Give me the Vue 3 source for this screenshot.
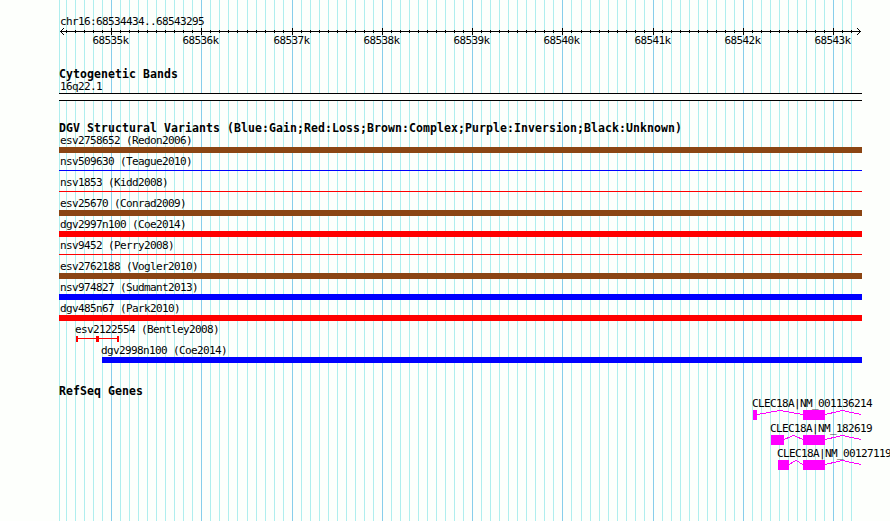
<script setup>
const inicio = 68534434;
const fin = 68543295;
const escala = 800 / (fin - inicio + 1);

function posicion(bp){
  return Math.round(60 + (bp - inicio) * escala);
}

// una linea cada 100 bases, mas oscura cada 1000
let lineas = [];
for(let bp = 68534500; bp < 68543300; bp += 100){
  lineas.push({ x: posicion(bp), mayor: bp % 1000 === 0, texto: bp / 1000 + 'k' });
}
const mayores = lineas.filter(l => l.mayor);

const variantes = [
  { nombre: 'esv2758652 (Redon2006)', x: 59, color: '#8b4513', tipo: 'barra' },
  { nombre: 'nsv509630 (Teague2010)', x: 59, color: '#0000ff', tipo: 'linea' },
  { nombre: 'nsv1853 (Kidd2008)', x: 59, color: '#ff0000', tipo: 'linea' },
  { nombre: 'esv25670 (Conrad2009)', x: 59, color: '#8b4513', tipo: 'barra' },
  { nombre: 'dgv2997n100 (Coe2014)', x: 59, color: '#ff0000', tipo: 'barra' },
  { nombre: 'nsv9452 (Perry2008)', x: 59, color: '#ff0000', tipo: 'linea' },
  { nombre: 'esv2762188 (Vogler2010)', x: 59, color: '#8b4513', tipo: 'barra' },
  { nombre: 'nsv974827 (Sudmant2013)', x: 59, color: '#0000ff', tipo: 'barra' },
  { nombre: 'dgv485n67 (Park2010)', x: 59, color: '#ff0000', tipo: 'barra' },
  { nombre: 'esv2122554 (Bentley2008)', x: 74, color: '#ff0000', tipo: 'rango' },
  { nombre: 'dgv2998n100 (Coe2014)', x: 102, texto: 101, color: '#0000ff', tipo: 'barra' }
];

const genes = [
  { nombre: 'CLEC18A|NM_001136214', texto: 752, x: 753, ancho: 4 },
  { nombre: 'CLEC18A|NM_182619', texto: 770, x: 771, ancho: 13 },
  { nombre: 'CLEC18A|NM_001271197', texto: 777, x: 778, ancho: 11 }
];

function intron(g){
  let a = g.x + g.ancho;
  return `${a},4.5 ${(a + 803) / 2},0.5 803,4.5`;
}
</script>

<template>
  <div class="navegador">
    <svg class="rejilla" width="890" height="521" shape-rendering="crispEdges">
      <rect x="59" y="0" width="1" height="521" fill="#afeeee" />
      <rect v-for="l in lineas" :key="l.x" :x="l.x" y="0" width="1" height="521" :fill="l.mayor ? '#87ceeb' : '#afeeee'" />
    </svg>

    <div class="pistas">
      <div class="regla">
        <div class="etiqueta region">chr16:68534434..68543295</div>
        <svg class="eje" width="890" height="7" shape-rendering="crispEdges">
          <rect x="60" y="3" width="801" height="1" />
          <rect v-for="l in lineas" :key="l.x" :x="l.x" :y="l.mayor ? 0 : 2" width="1" :height="l.mayor ? 7 : 3" />
          <path d="M61 2h1v1h-1zM62 1h1v1h-1zM63 0h1v1h-1zM61 4h1v1h-1zM62 5h1v1h-1zM63 6h1v1h-1z" />
          <path d="M859 2h1v1h-1zM858 1h1v1h-1zM857 0h1v1h-1zM859 4h1v1h-1zM858 5h1v1h-1zM857 6h1v1h-1z" />
        </svg>
        <svg class="numeros" width="890" height="12">
          <text v-for="l in mayores" :key="l.x" :x="l.x - 18.5" y="9">{{ l.texto }}</text>
        </svg>
      </div>

      <div class="bandas">
        <h2>Cytogenetic Bands</h2>
        <div class="etiqueta region">16q22.1</div>
        <div class="banda"></div>
      </div>

      <div class="variantes">
        <h2>DGV Structural Variants (Blue:Gain;Red:Loss;Brown:Complex;Purple:Inversion;Black:Unknown)</h2>
        <div v-for="v in variantes" :key="v.nombre" class="variante">
          <div class="etiqueta" :style="{ paddingLeft: (v.texto || v.x + 1) + 'px' }">{{ v.nombre }}</div>
          <svg width="890" height="9" shape-rendering="crispEdges" :fill="v.color">
            <rect v-if="v.tipo === 'barra'" :x="v.x" y="1" :width="862 - v.x" height="6" />
            <rect v-if="v.tipo === 'linea'" :x="v.x" y="3" :width="862 - v.x" height="1" />
            <g v-if="v.tipo === 'rango'">
              <rect x="76" y="3" width="43" height="1" />
              <rect x="76" y="1" width="2" height="6" />
              <rect x="96" y="1" width="3" height="6" />
              <rect x="117" y="1" width="2" height="6" />
            </g>
          </svg>
        </div>
      </div>

      <div class="genes">
        <h2>RefSeq Genes</h2>
        <div v-for="g in genes" :key="g.nombre" class="gen">
          <div class="etiqueta" :style="{ paddingLeft: g.texto + 'px' }">{{ g.nombre }}</div>
          <svg width="890" height="12" shape-rendering="crispEdges">
            <rect :x="g.x" y="0" :width="g.ancho" height="10" fill="#ff00ff" />
            <rect x="803" y="0" width="22" height="10" fill="#ff00ff" />
            <polyline :points="intron(g)" />
            <polyline points="825,4.5 842.5,0.5 861,4.5" />
          </svg>
        </div>
      </div>
    </div>
  </div>
</template>

<style>
body{
  margin: 0;
  overflow: hidden;
}
</style>

<style scoped>
.navegador{
  display: grid;
  width: 890px;
  height: 521px;
  overflow: hidden;
  background-color: #fdfffc;
  color: #000;
  font-family: "DejaVu Sans Mono", "Liberation Mono", monospace;
  font-size: 11px;
}
.rejilla, .pistas{
  grid-area: 1 / 1;
}
.pistas{
  display: flex;
  flex-direction: column;
  width: 890px;
  min-width: 0;
  overflow: hidden;
}
svg{
  display: block;
}
.etiqueta, .numeros{
  box-sizing: border-box;
  height: 12px;
  line-height: 12px;
  letter-spacing: -0.622px;
  white-space: nowrap;
}
.etiqueta{
  padding-top: 1px;
}
.region{
  padding-left: 60px;
}
.regla{
  padding-top: 15px;
}
.eje{
  margin-top: 1px;
}
h2{
  margin: 0;
  padding-left: 59px;
  height: 12px;
  line-height: 12px;
  font-size: 11.5px;
  font-weight: bold;
  letter-spacing: 0.077px;
  white-space: nowrap;
}
.bandas{
  margin-top: 21px;
}
.banda{
  box-sizing: border-box;
  width: 803px;
  height: 8px;
  margin: 1px 0 0 59px;
  border: solid #000;
  border-width: 1px 0;
  background-color: #fdfffc;
}
.variantes{
  margin-top: 21px;
}
.genes{
  margin-top: 20px;
}
.gen{
  height: 25px;
}
.gen svg{
  margin-top: 1px;
}
polyline{
  fill: none;
  stroke: #ff00ff;
}
</style>
